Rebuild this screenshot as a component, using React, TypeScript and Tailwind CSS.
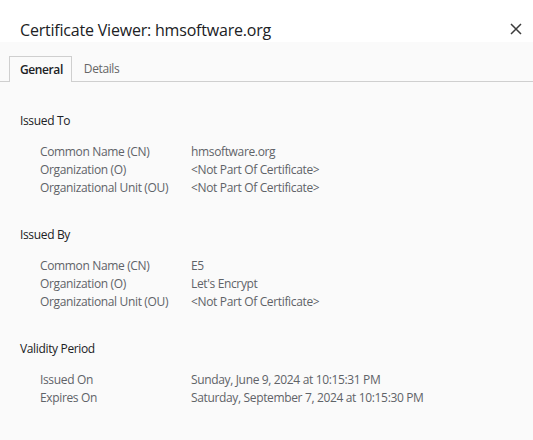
const sections = [
  {
    id: 1,
    title: "Issued To",
    rows: [
      { label: "Common Name (CN)", value: "hmsoftware.org" },
      { label: "Organization (O)", value: "<Not Part Of Certificate>" },
      { label: "Organizational Unit (OU)", value: "<Not Part Of Certificate>" },
    ],
  },
  {
    id: 2,
    title: "Issued By",
    rows: [
      { label: "Common Name (CN)", value: "E5" },
      { label: "Organization (O)", value: "Let's Encrypt" },
      { label: "Organizational Unit (OU)", value: "<Not Part Of Certificate>" },
    ],
  },
  {
    id: 3,
    title: "Validity Period",
    rows: [
      { label: "Issued On", value: "Sunday, June 9, 2024 at 10:15:31 PM" },
      { label: "Expires On", value: "Saturday, September 7, 2024 at 10:15:30 PM" },
    ],
  },
];

const App = () => {
  return (
    <div className="w-[533px] h-[440px] bg-[#fafafa] font-['Open_Sans',sans-serif] overflow-hidden">
      <div className="h-[42px] bg-white flex items-start justify-between pl-5 pr-[11px] pt-[19px]">
        <h1 className="text-[16px] leading-[22px] tracking-[-0.2px] text-[#202124]">
          Certificate Viewer: hmsoftware.org
        </h1>
        <svg width="12" height="12" viewBox="0 0 12 12" className="mt-[4px]">
          <path d="M1 1 L11 11 M11 1 L1 11" stroke="#3c3c3c" strokeWidth="1.5" />
        </svg>
      </div>

      <div className="flex pl-[9px] pt-[14px] border-b border-[#cfcfcf] h-[40px] text-[12px] tracking-[-0.4px]">
        <div className="h-[26px] pl-[10px] pr-[8px] border border-[#cfcfcf] border-b-0 bg-[#fafafa] -mb-px leading-[25px] font-semibold text-[#202124]">
          General
        </div>
        <div className="h-[25px] px-[12px] leading-[25px] text-[#666]">
          Details
        </div>
      </div>

      <div className="pl-5 pt-[30px] text-[12px] tracking-[-0.35px]">
        {sections.map((section) => (
          <div key={section.id} className="mb-[29px]">
            <h3 className="h-[18px] leading-[18px] text-[#202124] mb-[13px]">
              {section.title}
            </h3>
            {section.rows.map((row) => (
              <div key={row.label} className="flex h-[18px] leading-[18px] pl-5 text-[#5f6368]">
                <span className="w-[151px]">{row.label}</span>
                <span>{row.value}</span>
              </div>
            ))}
          </div>
        ))}
      </div>
    </div>
  );
};

export default App;
